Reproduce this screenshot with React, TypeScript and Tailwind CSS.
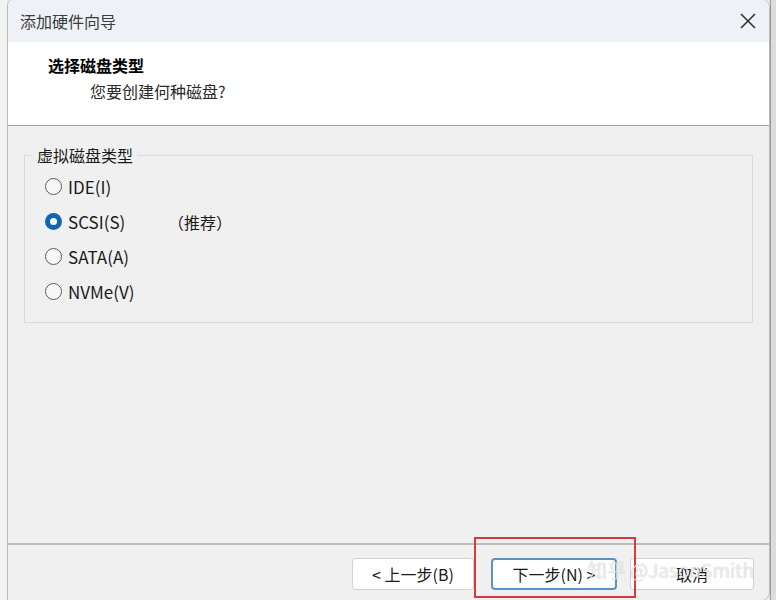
// 添加硬件向导 — 选择磁盘类型 (VMware 向导对话框截图)

const RADIOS = [
  { label: "IDE(I)", checked: false },
  { label: "SCSI(S)", checked: true, note: "（推荐）" },
  { label: "SATA(A)", checked: false },
  { label: "NVMe(V)", checked: false },
];

function Radio({ checked }: { checked: boolean }) {
  return checked ? (
    <span className="w-[17px] h-[17px] rounded-full bg-[#1464b4] flex items-center justify-center shrink-0">
      <span className="w-[7px] h-[7px] rounded-full bg-white" />
    </span>
  ) : (
    <span className="w-[17px] h-[17px] rounded-full border border-[#5c5c5c] bg-[#f7f7f7] shrink-0" />
  );
}

function Button({
  children,
  primary,
  className = "",
}: {
  children: React.ReactNode;
  primary?: boolean;
  className?: string;
}) {
  return (
    <button
      type="button"
      className={`h-[32px] rounded-[4px] bg-white text-[16px] text-[#1a1a1a] flex items-center justify-center ${
        primary ? "border-2 border-[#5a93c6]" : "border border-[#d2d2d2]"
      } ${className}`}
    >
      {children}
    </button>
  );
}

export default function App() {
  return (
    <div
      className="relative w-[776px] h-[600px] overflow-hidden bg-[#e6e6e6] flex"
      style={{ fontFamily: '"Noto Sans CJK SC", "Noto Sans", sans-serif' }}
    >
      <div className="w-[7px] shrink-0 bg-[#f2f2f2]" />

      {/* dialog window */}
      <div className="w-[763px] shrink-0 flex flex-col border-l border-r border-[#b9b9b9] rounded-tl-[6px] rounded-tr-[8px] rounded-br-[8px] overflow-hidden bg-[#f0f0f0]">
        {/* title bar */}
        <div className="h-[42px] shrink-0 bg-[#eef1f6] flex items-center justify-between pl-[12px] pr-[12px]">
          <span className="text-[16px] text-[#3c3c3c]">添加硬件向导</span>
          <svg width="18" height="18" viewBox="0 0 18 18">
            <path d="M2 2 L16 16 M16 2 L2 16" stroke="#333" strokeWidth="1.6" />
          </svg>
        </div>

        {/* header */}
        <div className="h-[84px] shrink-0 bg-white border-b border-[#a6a6a6] pt-[10px]">
          <div className="pl-[40px] text-[16px] font-bold text-black leading-[26px]">选择磁盘类型</div>
          <div className="pl-[82px] text-[16px] text-[#2a2a2a] leading-[26px]">您要创建何种磁盘?</div>
        </div>

        {/* body */}
        <div className="flex-1 pt-[19px] px-[16px]">
          <fieldset className="border border-[#dadada] h-[178px]">
            <legend className="ml-[8px] px-[4px] text-[16px] text-[#1a1a1a] leading-[20px]">虚拟磁盘类型</legend>
            <div className="flex flex-col pl-[20px] pt-[4px]">
              {RADIOS.map((r) => (
                <div key={r.label} className="h-[35px] flex items-center gap-[6px]">
                  <Radio checked={r.checked} />
                  <span className="text-[17px] text-[#1a1a1a] w-[94px]">{r.label}</span>
                  {r.note && <span className="text-[16px] text-[#1a1a1a]">{r.note}</span>}
                </div>
              ))}
            </div>
          </fieldset>
        </div>

        {/* footer */}
        <div className="h-[57px] shrink-0 border-t-2 border-[#bcbcbc] flex items-start pt-[13px] pl-[344px]">
          <Button className="w-[122px]">&lt; 上一步(B)</Button>
          <Button primary className="w-[126px] ml-[17px]">下一步(N) &gt;</Button>
          <Button className="w-[124px] ml-[13px]">取消</Button>
        </div>
      </div>

      {/* window behind, right edge */}
      <div className="flex-1 bg-[#dcdcdc] border-l border-[#9a9a9a]" />

      {/* annotation box */}
      <div className="absolute left-[474px] top-[537px] w-[162px] h-[61px] border-2 border-[#d23b3f]" />

      {/* watermark */}
      <div className="absolute left-[588px] top-[556px] text-[19px] text-white/75 [text-shadow:0_0_1px_rgba(0,0,0,0.3)] whitespace-nowrap">
        知乎 @JasonSmith
      </div>
    </div>
  );
}
